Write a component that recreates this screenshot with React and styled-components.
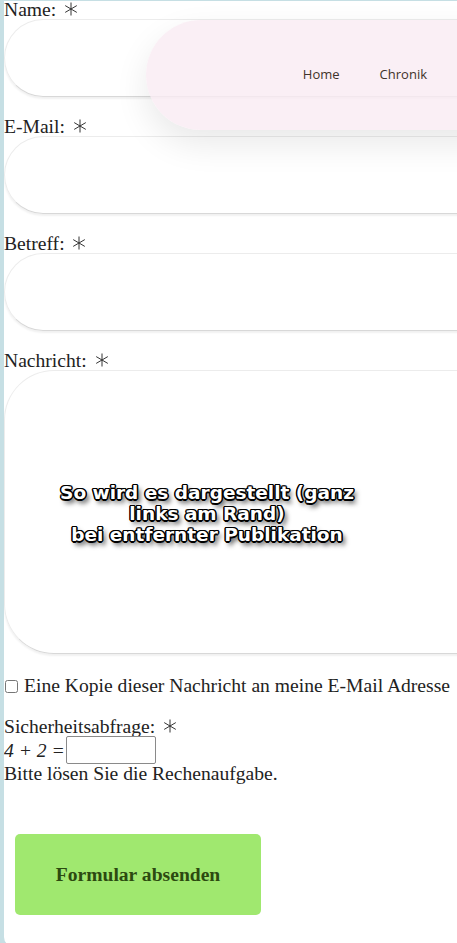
import React from 'react';
import styled, { createGlobalStyle } from 'styled-components';

const GlobalStyle = createGlobalStyle`
  html, body {
    margin: 0;
    padding: 0;
    background: #c6dfe4;
    overflow: hidden;
  }
`;

function Star() {
  return (
    <StarIcon viewBox="0 0 14 14" aria-hidden="true">
      <line x1="7" y1="0.5" x2="7" y2="13.5" />
      <line x1="1.2" y1="3.6" x2="12.8" y2="10.4" />
      <line x1="1.2" y1="10.4" x2="12.8" y2="3.6" />
    </StarIcon>
  );
}

export default function App() {
  return (
    <>
      <GlobalStyle />
      <Page>
        <Nav>
          <NavLink>Home</NavLink>
          <NavLink>Chronik</NavLink>
        </Nav>

        <Form onSubmit={(e) => e.preventDefault()}>
          <Field>
            <Label>Name: <Star /></Label>
            <Input type="text" />
          </Field>
          <Field>
            <Label>E-Mail: <Star /></Label>
            <Input type="email" />
          </Field>
          <Field>
            <Label>Betreff: <Star /></Label>
            <Input type="text" />
          </Field>
          <Field>
            <Label>Nachricht: <Star /></Label>
            <TextArea />
          </Field>

          <CopyRow>
            <input type="checkbox" />
            <span>Eine Kopie dieser Nachricht an meine E-Mail Adresse</span>
          </CopyRow>

          <Captcha>
            <Label>Sicherheitsabfrage: <Star /></Label>
            <MathRow>
              <em>4 + 2 =</em>
              <SmallInput type="text" />
            </MathRow>
            <span>Bitte lösen Sie die Rechenaufgabe.</span>
          </Captcha>

          <SubmitButton type="submit">Formular absenden</SubmitButton>
        </Form>

        <Note>
          So wird es dargestellt (ganz<br />
          links am Rand)<br />
          bei entfernter Publikation
        </Note>
      </Page>
    </>
  );
}

const Page = styled.div`
  position: relative;
  margin: 1px 0 0 4px;
  min-height: 946px;
  background: #fff;
  border-bottom-left-radius: 10px;
  overflow: hidden;
  font-family: "Liberation Serif", "Times New Roman", serif;
  font-size: 19.6px;
  color: #222;
`;

const Nav = styled.nav`
  position: absolute;
  top: 19px;
  left: 142px;
  right: -80px;
  height: 110px;
  border-radius: 55px;
  background: rgba(248, 234, 242, 0.78);
  box-shadow: 0 14px 34px rgba(0, 0, 0, 0.09);
  display: flex;
  align-items: center;
  justify-content: flex-end;
  gap: 40px;
  padding-right: 110px;
  box-sizing: border-box;
  z-index: 2;
`;

const NavLink = styled.a`
  font-family: "Open Sans", "Liberation Sans", sans-serif;
  font-size: 13px;
  color: #3f332a;
  margin-top: -3px;
`;

const Form = styled.form`
  display: flex;
  flex-direction: column;
`;

const Field = styled.div`
  display: flex;
  flex-direction: column;
  margin-bottom: 21px;
`;

const Label = styled.label`
  display: block;
  line-height: 18px;
`;

const StarIcon = styled.svg`
  width: 14px;
  height: 14px;
  margin-left: 3px;
  vertical-align: 0px;
  stroke: #333;
  stroke-width: 1;
`;

const Input = styled.input`
  box-sizing: border-box;
  width: calc(100% + 80px);
  height: 78px;
  border: 1px solid #ececec;
  border-bottom-color: #d8d8d8;
  border-radius: 40px;
  background: transparent;
  box-shadow: 0 2px 2px rgba(0, 0, 0, 0.06);
  outline: none;
`;

const TextArea = styled.textarea`
  box-sizing: border-box;
  width: calc(100% + 80px);
  height: 284px;
  border: 1px solid #ececec;
  border-bottom-color: #d8d8d8;
  border-radius: 50px;
  background: transparent;
  box-shadow: 0 2px 2px rgba(0, 0, 0, 0.06);
  resize: none;
  outline: none;
`;

const CopyRow = styled.label`
  display: flex;
  align-items: center;
  gap: 6px;
  line-height: 22px;

  input {
    margin: 0 0 0 1px;
    width: 13px;
    height: 13px;
  }
`;

const Captcha = styled.div`
  display: flex;
  flex-direction: column;
  margin-top: 21px;
  line-height: 19px;
`;

const MathRow = styled.div`
  display: flex;
  align-items: center;
  gap: 1px;

  em {
    font-style: italic;
  }
`;

const SmallInput = styled.input`
  box-sizing: border-box;
  width: 90px;
  height: 28px;
  border: 1px solid #8a8a8a;
  border-radius: 2px;
`;

const SubmitButton = styled.button`
  align-self: flex-start;
  margin: 51px 0 0 11px;
  width: 246px;
  height: 81px;
  border: none;
  border-radius: 5px;
  background: #a0e86f;
  color: #2c4a10;
  font-family: "Liberation Serif", "Times New Roman", serif;
  font-weight: bold;
  font-size: 19.6px;
`;

const Note = styled.div`
  position: absolute;
  top: 481px;
  left: 23px;
  width: 360px;
  text-align: center;
  font-family: "DejaVu Sans", Verdana, sans-serif;
  font-weight: bold;
  font-size: 18.5px;
  line-height: 21px;
  color: #fff;
  z-index: 3;
  text-shadow:
    -1px -1px 0 #000, 1px -1px 0 #000, -1px 1px 0 #000, 1px 1px 0 #000,
    0 -1.5px 0 #000, 0 1.5px 0 #000, -1.5px 0 0 #000, 1.5px 0 0 #000,
    3px 4px 5px rgba(0, 0, 0, 0.75);
`;
